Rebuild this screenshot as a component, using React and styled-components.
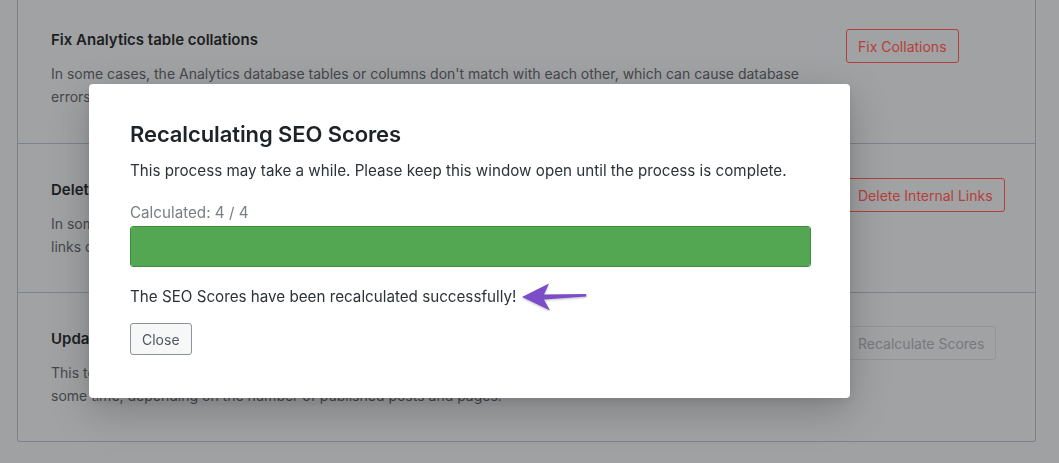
import styled, { createGlobalStyle } from "styled-components";

const GlobalStyle = createGlobalStyle`
	html, body {
		margin: 0;
		padding: 0;
		background: #a0a1a3;
		font-family: Inter, "Noto Sans", "Liberation Sans", sans-serif;
		-webkit-font-smoothing: antialiased;
	}
	* {
		box-sizing: border-box;
	}
`;

// page under the modal, drawn in its dimmed colours
const Page = styled.div`
	width: 1059px;
	height: 463px;
	overflow: hidden;
	padding: 0 23px 0 17px;
`;

const Card = styled.div`
	margin-top: -6px;
	background: #a1a2a4;
	border: 1px solid #7d828a;
	border-top: none;
	border-radius: 0 0 3px 3px;
`;

const Row = styled.div`
	display: grid;
	grid-template-columns: 762px 160px;
	column-gap: 33px;
	align-items: start;
	height: 149px;
	padding: 34px 34px 0 33px;
	& + & {
		border-top: 1px solid #7d828a;
	}
`;

const RowTitle = styled.h3`
	margin: 0;
	font-size: 15px;
	line-height: 24px;
	font-weight: 600;
	color: #1c1f22;
`;

const RowText = styled.p`
	margin: 10px 0 0;
	font-size: 14px;
	line-height: 23px;
	color: #45484c;
`;

const ToolButton = styled.button`
	justify-self: start;
	margin-top: ${({ $top = 0 }) => $top}px;
	height: 34px;
	padding: 0 11px;
	font-family: inherit;
	font-size: 14px;
	background: transparent;
	border-radius: 3px;
	border: 1px solid ${({ $disabled }) => ($disabled ? "#939598" : "#b5403b")};
	color: ${({ $disabled }) => ($disabled ? "#77797d" : "#b5403b")};
	white-space: nowrap;
`;

const Overlay = styled.div`
	position: fixed;
	inset: 0;
	display: flex;
	align-items: flex-start;
	justify-content: flex-start;
	padding: 84px 0 0 89px;
`;

const Modal = styled.div`
	width: 761px;
	height: 314px;
	background: #fff;
	border-radius: 4px;
	padding: 35px 39px 0 41px;
	box-shadow: 0 12px 40px rgba(0, 0, 0, 0.22), 0 3px 10px rgba(0, 0, 0, 0.08);
`;

const ModalTitle = styled.h2`
	margin: 0;
	font-size: 22px;
	line-height: 30px;
	font-weight: 600;
	color: #1d2327;
	letter-spacing: -0.1px;
`;

const ModalText = styled.p`
	margin: ${({ $top = 0 }) => $top}px 0 0;
	font-size: 15.2px;
	line-height: 24px;
	color: ${({ $muted }) => ($muted ? "#7b7f84" : "#2c3338")};
	display: flex;
	align-items: center;
`;

const Progress = styled.div`
	margin-top: 1px;
	height: 41px;
	border: 1px solid #3e8c40;
	border-radius: 3px;
	background: #f0f0f1;
	overflow: hidden;
`;

const ProgressFill = styled.div`
	height: 100%;
	background: #53a753;
`;

const CloseButton = styled.button`
	margin-top: 11px;
	height: 32px;
	padding: 0 11px;
	font-family: inherit;
	font-size: 14px;
	color: #50575e;
	background: #f6f7f7;
	border: 1px solid #8f9398;
	border-radius: 3px;
`;

const Arrow = styled.svg`
	flex: none;
	margin: 0 0 0 4px;
	filter: drop-shadow(0 1px 1px rgba(0, 0, 0, 0.25));
`;

const rows = [
	{
		title: "Fix Analytics table collations",
		text: "In some cases, the Analytics database tables or columns don't match with each other, which can cause database errors. This tool can fix that issue.",
		button: "Fix Collations",
		top: 1,
	},
	{
		title: "Delete Internal Links Data",
		text: "In some instances, the internal links data might show an inflated number or no number at all. Deleting the internal links data might fix the issue.",
		button: "Delete Internal Links",
		top: 0,
	},
	{
		title: "Update SEO Scores",
		text: "This tool will calculate the SEO score for the posts/pages that have a Focus Keyword set. Note: This may take some time, depending on the number of published posts and pages.",
		button: "Recalculate Scores",
		top: -1,
		disabled: true,
	},
];

const App = () => {
	const done = 4;
	const total = 4;
	return (
		<>
			<GlobalStyle />
			<Page>
				<Card>
					{rows.map((row) => (
						<Row key={row.title}>
							<div>
								<RowTitle>{row.title}</RowTitle>
								<RowText>{row.text}</RowText>
							</div>
							<ToolButton $top={row.top} $disabled={row.disabled}>
								{row.button}
							</ToolButton>
						</Row>
					))}
				</Card>
			</Page>
			<Overlay>
				<Modal>
					<ModalTitle>Recalculating SEO Scores</ModalTitle>
					<ModalText $top={10}>This process may take a while. Please keep this window open until the process is complete.</ModalText>
					<ModalText $top={18} $muted>
						Calculated: {done} / {total}
					</ModalText>
					<Progress>
						<ProgressFill style={{ width: `${(done / total) * 100}%` }} />
					</Progress>
					<ModalText $top={15}>
						The SEO Scores have been recalculated successfully!
						<Arrow width="68" height="30" viewBox="0 0 68 30">
							<path d="M2 15 L29 1.5 L24 12.6 L66 12 L66.5 14.6 L24 17.6 L30 28.5 Z" fill="#7b4dc8" />
						</Arrow>
					</ModalText>
					<CloseButton>Close</CloseButton>
				</Modal>
			</Overlay>
		</>
	);
};

export default App;
